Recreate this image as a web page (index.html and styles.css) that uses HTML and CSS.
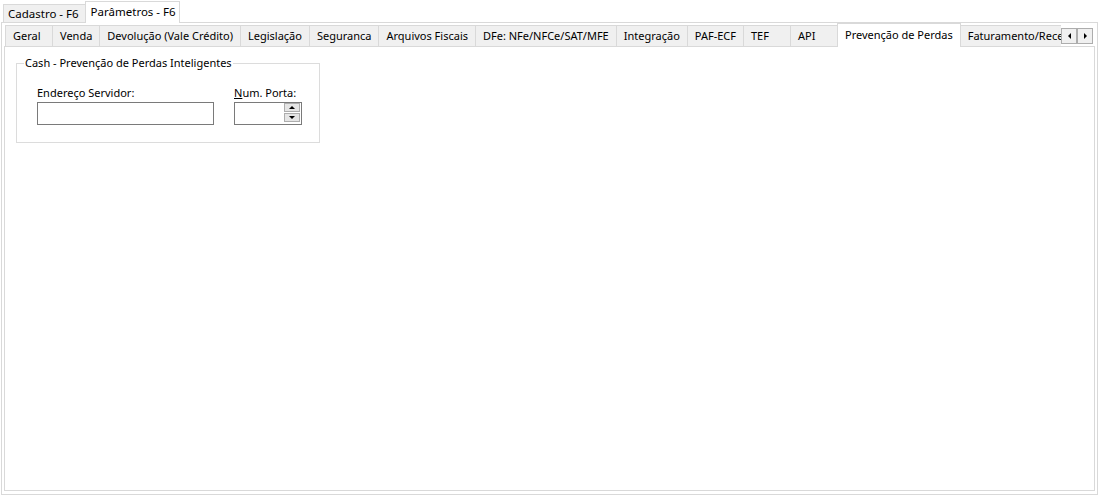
FILE: index.html
```html
<!DOCTYPE html>
<html lang="pt-BR">
<head>
    <meta charset="UTF-8">
    <title>Parâmetros</title>
    <link rel="stylesheet" href="styles.css">
</head>
<body>
<div class="outer-tabs">
    <div class="outer-tab">Cadastro - F6</div>
    <div class="outer-tab active">Parâmetros - F6</div>
</div>
<div class="outer-page">
    <div class="inner-strip">
        <div class="inner-tabs">
            <div class="tab">Geral</div>
            <div class="tab">Venda</div>
            <div class="tab">Devolução (Vale Crédito)</div>
            <div class="tab">Legislação</div>
            <div class="tab">Seguranca</div>
            <div class="tab">Arquivos Fiscais</div>
            <div class="tab">DFe: NFe/NFCe/SAT/MFE</div>
            <div class="tab">Integração</div>
            <div class="tab">PAF-ECF</div>
            <div class="tab">TEF</div>
            <div class="tab">API</div>
            <div class="tab active">Prevenção de Perdas</div>
            <div class="tab">Faturamento/Recebimento</div>
        </div>
        <div class="scroller">
            <span class="scroll-btn"><span class="arrow-left"></span></span>
            <span class="scroll-btn"><span class="arrow-right"></span></span>
        </div>
    </div>
    <div class="inner-page">
        <fieldset class="group">
            <legend>Cash - Prevenção de Perdas Inteligentes</legend>
            <div class="fields">
                <div class="field">
                    <label for="servidor">Endereço Servidor:</label>
                    <input type="text" id="servidor" class="edit">
                </div>
                <div class="field">
                    <label for="porta"><u>N</u>um. Porta:</label>
                    <div class="spin">
                        <input type="text" id="porta" class="edit spin-edit">
                        <span class="spin-btns">
                            <span class="spin-btn"><span class="arrow-up"></span></span>
                            <span class="spin-btn"><span class="arrow-down"></span></span>
                        </span>
                    </div>
                </div>
            </div>
        </fieldset>
    </div>
</div>
</body>
</html>
```

FILE: styles.css
```css
body {
    margin: 0;
    font-family: "Noto Sans", "Open Sans", sans-serif;
    font-size: 11px;
    color: #000;
    background-color: #fff;
}

/* outer page control */
.outer-tabs {
    display: flex;
    align-items: flex-end;
    height: 23px;
    margin-bottom: -1px;
    padding-left: 3px;
    position: relative;
    z-index: 1;
    font-size: 11.5px;
}
.outer-tab {
    height: 19px;
    box-sizing: border-box;
    border: 1px solid #d9d9d9;
    background-color: #f0f0f0;
    padding: 0 6px 0 4px;
    line-height: 17px;
    white-space: nowrap;
}
.outer-tab.active {
    height: 22px;
    background-color: #fff;
    border-bottom: none;
    margin-left: -1px;
    padding: 0 3px 0 5px;
    line-height: 19px;
}
.outer-page {
    margin-left: 1px;
    width: 1097px;
    height: 473px;
    box-sizing: border-box;
    border: 1px solid #d9d9d9;
    padding: 0 2px;
}

/* inner page control */
.inner-strip {
    display: flex;
    align-items: flex-end;
    height: 24px;
    margin-bottom: -1px;
    position: relative;
    z-index: 1;
}
.inner-tabs {
    flex: 1;
    min-width: 0;
    display: flex;
    align-items: flex-end;
    height: 24px;
    overflow: hidden;
    padding-left: 1px;
}
.tab {
    flex: none;
    height: 22px;
    min-width: 48px;
    box-sizing: border-box;
    border: 1px solid #d9d9d9;
    background-color: #f0f0f0;
    padding: 0 7px;
    line-height: 19px;
    white-space: nowrap;
}
.tab + .tab {
    margin-left: -1px;
}
.tab.active {
    height: 24px;
    background-color: #fff;
    border-bottom: none;
    position: relative;
    z-index: 1;
    line-height: 21px;
}
.scroller {
    flex: none;
    display: flex;
    align-self: center;
    margin: 1px 2px 0 0;
}
.scroll-btn {
    width: 16px;
    height: 16px;
    box-sizing: border-box;
    border: 1px solid #adadad;
    background-color: #f0f0f0;
    display: flex;
    align-items: center;
    justify-content: center;
}
.arrow-left, .arrow-right, .arrow-up, .arrow-down {
    width: 0;
    height: 0;
    border-style: solid;
    border-color: transparent;
}
.arrow-left {
    border-width: 3px 3px 3px 0;
    border-right-color: #000;
}
.arrow-right {
    border-width: 3px 0 3px 3px;
    border-left-color: #000;
}
.arrow-up {
    border-width: 0 3px 3px 3px;
    border-bottom-color: #000;
}
.arrow-down {
    border-width: 3px 3px 0 3px;
    border-top-color: #000;
}
.inner-page {
    height: 445px;
    box-sizing: border-box;
    border: 1px solid #d9d9d9;
    background-color: #fff;
}

/* group box */
.group {
    margin: 8px 0 0 11px;
    padding: 0;
    width: 304px;
    height: 88px;
    box-sizing: border-box;
    border: 1px solid #dcdcdc;
}
.group legend {
    margin-left: 7px;
    padding: 0 1px;
    line-height: 16px;
}
.fields {
    display: flex;
    gap: 20px;
    padding: 14px 0 0 20px;
}
.field label {
    display: block;
    line-height: 15px;
    margin-bottom: 2px;
}
.edit {
    display: block;
    width: 177px;
    height: 23px;
    box-sizing: border-box;
    border: 1px solid #7a7a7a;
    margin: 0;
    padding: 0 3px;
    font: inherit;
    background-color: #fff;
}
.spin {
    position: relative;
    width: 68px;
}
.spin-edit {
    width: 68px;
}
.spin-btns {
    position: absolute;
    top: 1px;
    right: 2px;
    display: flex;
    flex-direction: column;
    gap: 1px;
}
.spin-btn {
    width: 16px;
    height: 9px;
    box-sizing: border-box;
    border: 1px solid #adadad;
    background-color: #e5e5e5;
    display: flex;
    align-items: center;
    justify-content: center;
}
```
